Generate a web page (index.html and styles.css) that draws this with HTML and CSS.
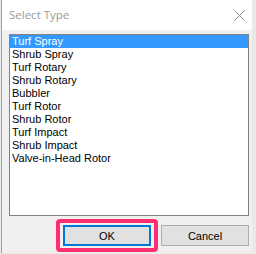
FILE: index.html
```html
<!DOCTYPE html>
<html lang="en">
<head>
    <meta charset="UTF-8">
    <title>Select Type</title>
    <link rel="stylesheet" href="styles.css">
</head>
<body>
    <div class="dialog">
        <div class="titlebar">
            <span class="title">Select Type</span>
            <svg class="close" width="11" height="11" viewBox="0 0 11 11">
                <path d="M0.5 0.5 L10.5 10.5 M10.5 0.5 L0.5 10.5" stroke="#8c8c8c" stroke-width="1" fill="none"/>
            </svg>
        </div>

        <div class="client">
            <!-- Список типов -->
            <ul class="type-list">
                <li class="selected">Turf Spray</li>
                <li>Shrub Spray</li>
                <li>Turf Rotary</li>
                <li>Shrub Rotary</li>
                <li>Bubbler</li>
                <li>Turf Rotor</li>
                <li>Shrub Rotor</li>
                <li>Turf Impact</li>
                <li>Shrub Impact</li>
                <li>Valve-in-Head Rotor</li>
            </ul>

            <div class="buttons">
                <div class="ok-wrap">
                    <button class="btn btn-default">OK</button>
                    <span class="highlight"></span>
                </div>
                <button class="btn">Cancel</button>
            </div>
        </div>
    </div>
</body>
</html>
```

FILE: styles.css
```css
body {
    margin: 0;
    padding: 0;
    background-color: #e9e9e9;
    font-family: 'Liberation Sans', Arial, sans-serif;
}

.dialog {
    margin-left: 1px;
    width: 250px;
    height: 253px;
    border-left: 1px solid #a0a0a0;
    display: flex;
    flex-direction: column;
    background-color: #f0f0f0;
}

.titlebar {
    height: 30px;
    background-color: #fff;
    display: flex;
    align-items: center;
    justify-content: space-between;
    padding: 0 7px 0 7px;
}

.title {
    font-family: 'Open Sans', sans-serif;
    font-size: 11.5px;
    color: #999;
    margin-top: -1px;
}

.close {
    margin-top: 1px;
}

.client {
    flex: 1;
    padding: 4px 0 0 7px;
}

.type-list {
    list-style: none;
    margin: 0;
    padding: 0;
    width: 238px;
    height: 180px;
    background-color: #fff;
    border: 1px solid #828282;
}

.type-list li {
    height: 13px;
    line-height: 13px;
    padding-left: 2px;
    font-size: 11px;
    color: #000;
}

.type-list li.selected {
    background-color: #3399ff;
    color: #fff;
}

.buttons {
    display: flex;
    gap: 10px;
    margin: 9px 0 0 54px;
}

.ok-wrap {
    position: relative;
}

.btn {
    width: 88px;
    height: 21px;
    padding: 0;
    font-family: 'Liberation Sans', Arial, sans-serif;
    font-size: 11px;
    color: #000;
    background-color: #e1e1e1;
    border: 1px solid #adadad;
}

.btn-default {
    border: 2px solid #0078d7;
}

/* рамка-выделение поверх кнопки */
.highlight {
    position: absolute;
    left: -7px;
    top: -6px;
    width: 94px;
    height: 25px;
    border: 4px solid #ff2e6e;
    border-radius: 4px;
}
```
